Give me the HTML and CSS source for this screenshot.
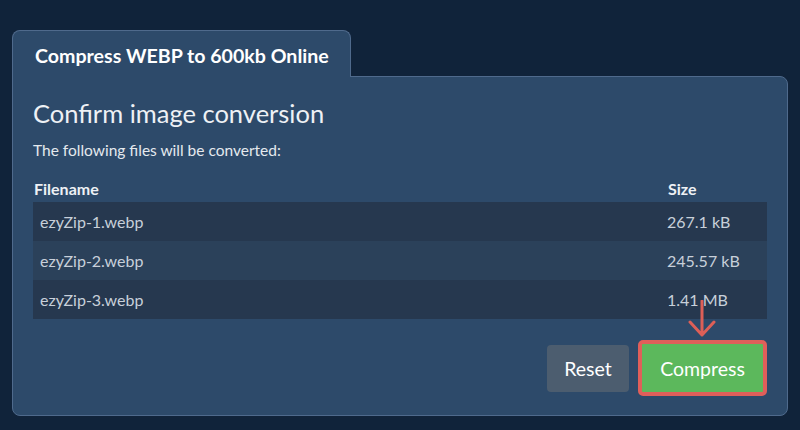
FILE: index.html
```html
<!DOCTYPE html>
<html lang="en">
<head>
<meta charset="utf-8">
<title>Compress WEBP to 600kb Online</title>
<link rel="stylesheet" href="styles.css">
</head>
<body>
<div class="page">
  <div class="tab">Compress WEBP to 600kb Online</div>
  <div class="panel">
    <h1 class="title">Confirm image conversion</h1>
    <p class="lead">The following files will be converted:</p>
    <div class="table">
      <div class="row head">
        <div class="cell name">Filename</div>
        <div class="cell size">Size</div>
      </div>
      <div class="row odd">
        <div class="cell name">ezyZip-1.webp</div>
        <div class="cell size">267.1 kB</div>
      </div>
      <div class="row even">
        <div class="cell name">ezyZip-2.webp</div>
        <div class="cell size">245.57 kB</div>
      </div>
      <div class="row odd">
        <div class="cell name">ezyZip-3.webp</div>
        <div class="cell size">1.41 MB</div>
      </div>
    </div>
    <div class="actions">
      <button class="btn reset">Reset</button>
      <div class="compress-wrap">
        <button class="btn compress">Compress</button>
        <svg class="arrow" width="30" height="38" viewBox="0 0 30 38">
          <path d="M15 1 V35 M3 22 L15 35 L27 22" fill="none" stroke="#dd5f57" stroke-width="3" stroke-linecap="round" stroke-linejoin="round"/>
        </svg>
      </div>
    </div>
  </div>
</div>
</body>
</html>
```
FILE: styles.css
```css
html, body {
  margin: 0;
  padding: 0;
}
body {
  background: #10233a;
  font-family: Lato, "Open Sans", sans-serif;
  color: #e8ecf1;
  width: 800px;
  height: 430px;
  overflow: hidden;
}
.page {
  padding: 30px 0 0 12px;
  display: flex;
  flex-direction: column;
  align-items: flex-start;
}
.tab {
  position: relative;
  z-index: 2;
  box-sizing: border-box;
  width: 339px;
  height: 47px;
  margin-bottom: -1px;
  background: #2d4a6a;
  border: 1px solid #4f6a8c;
  border-bottom: none;
  border-radius: 8px 8px 0 0;
  font-weight: 700;
  font-size: 19.6px;
  color: #ffffff;
  padding: 13px 0 0 22px;
  line-height: 24px;
}
.panel {
  box-sizing: border-box;
  width: 776px;
  height: 340px;
  background: #2d4a6a;
  border: 1px solid #4f6a8c;
  border-radius: 0 8px 8px 8px;
  padding: 20px 20px 0 20px;
  display: flex;
  flex-direction: column;
}
.title {
  margin: 0;
  font-weight: 400;
  font-size: 25.5px;
  line-height: 32px;
  color: #eef1f5;
}
.lead {
  margin: 11px 0 0 0;
  font-size: 15.5px;
  line-height: 20px;
  color: #e4e9ee;
}
.table {
  margin-top: 15px;
  width: 734px;
  display: flex;
  flex-direction: column;
}
.row {
  display: grid;
  grid-template-columns: 627px 107px;
  align-items: center;
}
.row.head {
  height: 27px;
  font-weight: 700;
  font-size: 16px;
  color: #eef1f5;
}
.row.head .cell.name {
  padding-left: 1px;
}
.row.head .cell.size {
  padding-left: 8px;
}
.row.odd {
  background: #26384f;
}
.row.even {
  background: #2b415a;
}
.row.odd, .row.even {
  height: 39px;
  font-size: 16px;
  color: #c8d0da;
}
.cell.name {
  padding-left: 7px;
}
.cell.size {
  padding-left: 7px;
}
.actions {
  margin-top: 21px;
  display: flex;
  justify-content: flex-end;
  align-items: center;
  gap: 9px;
  width: 734px;
}
.btn {
  font-family: Lato, "Open Sans", sans-serif;
  font-size: 19.5px;
  color: #ffffff;
  border: none;
  border-radius: 4px;
  cursor: pointer;
}
.reset {
  width: 82px;
  height: 47px;
  background: #4c5d6f;
}
.compress-wrap {
  position: relative;
}
.compress {
  display: block;
  box-sizing: border-box;
  width: 129px;
  height: 56px;
  background: #5cb85c;
  border: 4px solid #df5f5a;
  border-radius: 5px;
}
.arrow {
  position: absolute;
  left: 49px;
  top: -40px;
}
```
